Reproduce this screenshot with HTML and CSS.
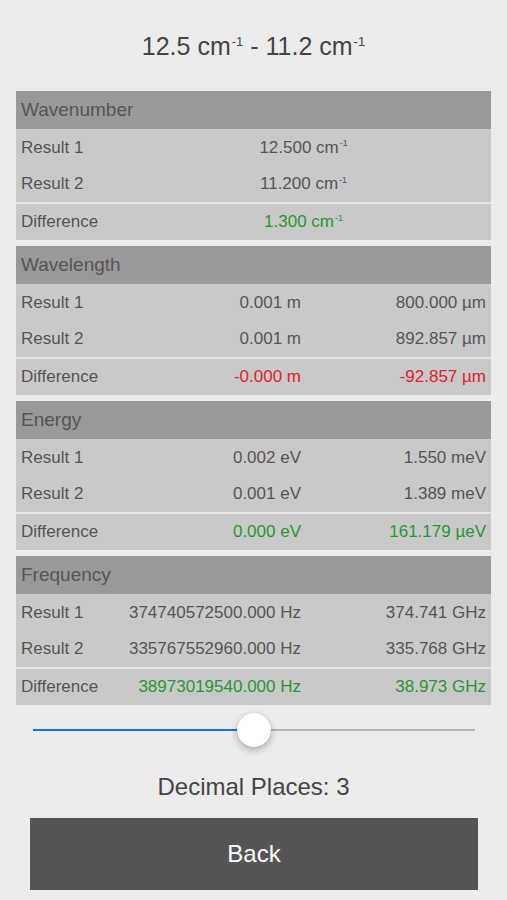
FILE: index.html
```html
<!DOCTYPE html>
<html lang="en">
<head>
<meta charset="UTF-8" />
<meta name="viewport" content="width=device-width, initial-scale=1" />
<title>Difference</title>
<link rel="stylesheet" href="styles.css">
</head>
<body>

<h1 class="title">12.5 cm<sup>-1</sup> - 11.2 cm<sup>-1</sup></h1>

<div class="results">
  <section class="group">
    <div class="group-head">Wavenumber</div>
    <div class="row">
      <span class="label">Result 1</span>
      <span class="val wide">12.500 cm<sup>-1</sup></span>
    </div>
    <div class="row">
      <span class="label">Result 2</span>
      <span class="val wide">11.200 cm<sup>-1</sup></span>
    </div>
    <div class="row diff">
      <span class="label">Difference</span>
      <span class="val wide pos">1.300 cm<sup>-1</sup></span>
    </div>
  </section>

  <section class="group">
    <div class="group-head">Wavelength</div>
    <div class="row">
      <span class="label">Result 1</span>
      <span class="val">0.001 m</span>
      <span class="val">800.000 µm</span>
    </div>
    <div class="row">
      <span class="label">Result 2</span>
      <span class="val">0.001 m</span>
      <span class="val">892.857 µm</span>
    </div>
    <div class="row diff">
      <span class="label">Difference</span>
      <span class="val neg">-0.000 m</span>
      <span class="val neg">-92.857 µm</span>
    </div>
  </section>

  <section class="group">
    <div class="group-head">Energy</div>
    <div class="row">
      <span class="label">Result 1</span>
      <span class="val">0.002 eV</span>
      <span class="val">1.550 meV</span>
    </div>
    <div class="row">
      <span class="label">Result 2</span>
      <span class="val">0.001 eV</span>
      <span class="val">1.389 meV</span>
    </div>
    <div class="row diff">
      <span class="label">Difference</span>
      <span class="val pos">0.000 eV</span>
      <span class="val pos">161.179 µeV</span>
    </div>
  </section>

  <section class="group">
    <div class="group-head">Frequency</div>
    <div class="row">
      <span class="label">Result 1</span>
      <span class="val">374740572500.000 Hz</span>
      <span class="val">374.741 GHz</span>
    </div>
    <div class="row">
      <span class="label">Result 2</span>
      <span class="val">335767552960.000 Hz</span>
      <span class="val">335.768 GHz</span>
    </div>
    <div class="row diff">
      <span class="label">Difference</span>
      <span class="val pos">38973019540.000 Hz</span>
      <span class="val pos">38.973 GHz</span>
    </div>
  </section>
</div>

<div class="slider-wrap">
  <input type="range" class="slider" id="decimales" min="0" max="6" value="3" />
</div>

<p class="decimals">Decimal Places: 3</p>

<button class="back">Back</button>

</body>
</html>
```

FILE: styles.css
```css
body {
  font-family: "Liberation Sans", Arial, sans-serif;
  margin: 0;
  background: #ececec;
  color: #555;
}
sup {
  font-size: 0.52em;
  vertical-align: 0;
  position: relative;
  top: -0.72em;
  margin-left: 1px;
}
.title {
  margin: 0;
  padding-top: 32px;
  height: 59px;
  text-align: center;
  font-size: 25px;
  line-height: 28px;
  font-weight: normal;
  color: #444;
}
.results {
  margin: 0 16px;
}
.group {
  margin-bottom: 6px;
  background: #c9c9c9;
}
.group-head {
  height: 38px;
  line-height: 38px;
  padding: 0 5px;
  background: #999;
  font-size: 19px;
  color: #555;
}
.row {
  display: grid;
  grid-template-columns: 100px 180px 1fr;
  align-items: center;
  height: 36px;
  padding: 0 5px;
  font-size: 17px;
}
.row:nth-child(2) {
  height: 37px;
}
.row.diff {
  border-top: 2px solid #e4e4e4;
}
.val {
  text-align: right;
  white-space: nowrap;
}
.val.wide {
  grid-column: 2 / 4;
  text-align: center;
}
.pos {
  color: #2a9630;
}
.neg {
  color: #e0202e;
}
.slider-wrap {
  margin: 8px 32px 0 33px;
  height: 34px;
  display: flex;
  align-items: center;
}
.slider {
  -webkit-appearance: none;
  appearance: none;
  width: 100%;
  height: 34px;
  margin: 0;
  background: transparent;
}
.slider::-webkit-slider-runnable-track {
  height: 2px;
  background: linear-gradient(to right, #1a6fe0 50%, #b4b4b4 50%);
}
.slider::-webkit-slider-thumb {
  -webkit-appearance: none;
  width: 34px;
  height: 34px;
  margin-top: -16px;
  border-radius: 50%;
  background: #fff;
  box-shadow: 0 3px 7px rgba(0, 0, 0, 0.28), 0 0 1px rgba(0, 0, 0, 0.2);
}
.decimals {
  margin: 26px 0 0;
  text-align: center;
  font-size: 24px;
  line-height: 28px;
  color: #444;
}
.back {
  display: block;
  margin: 17px 0 0 30px;
  width: 448px;
  height: 72px;
  background-color: #555;
  color: white;
  border: none;
  font-family: inherit;
  font-size: 24px;
  cursor: pointer;
}
```
